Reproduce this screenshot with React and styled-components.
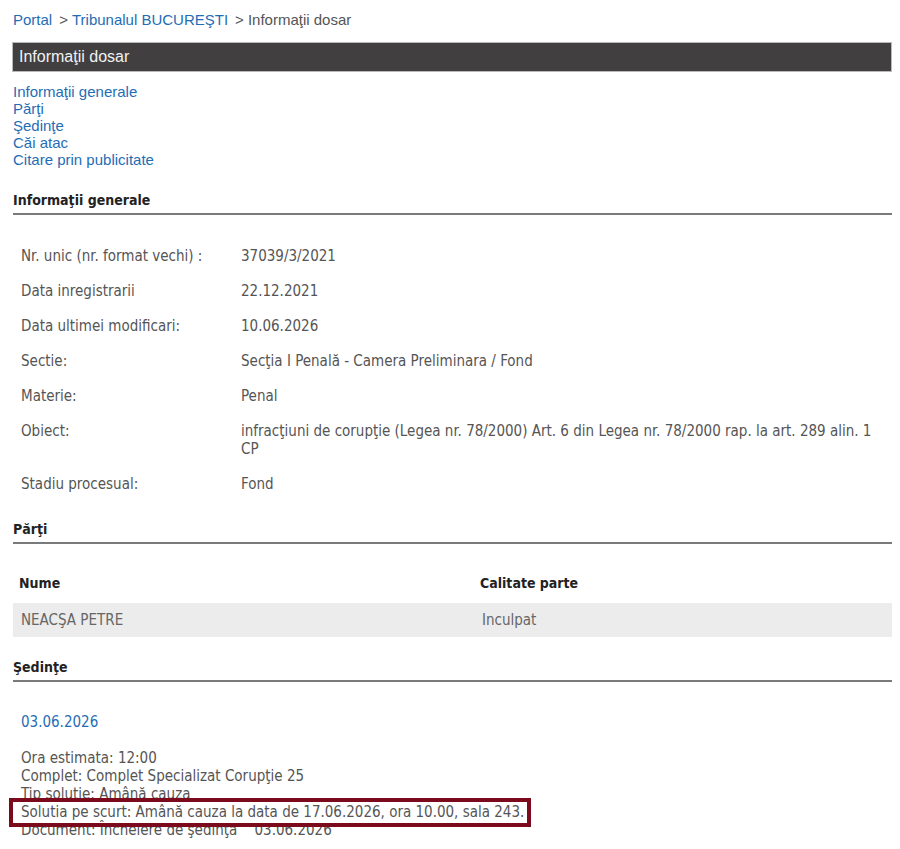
import styled, { createGlobalStyle } from "styled-components";

const GlobalStyle = createGlobalStyle`
  body {
    margin: 0;
    background: #fff;
    font-family: "Liberation Sans", Arial, sans-serif;
  }
`;

const Page = styled.div`
  padding: 11px 8px 0 12px;
  width: 880px;
`;

const Breadcrumb = styled.div`
  font-size: 15px;
  color: #555;
  line-height: 18px;
  padding-left: 1px;
  a {
    color: #1f6db5;
    text-decoration: none;
  }
  span.sep {
    margin: 0 4px 0 7px;
  }
`;

const TitleBar = styled.div`
  margin-top: 13px;
  height: 28px;
  background-color: #413f40;
  border: 1px solid #b9b9b9;
  color: #f2f2f2;
  font-size: 16px;
  line-height: 28px;
  padding-left: 6px;
`;

const Anchors = styled.ul`
  list-style: none;
  margin: 11px 0 0 1px;
  padding: 0;
  li {
    font-size: 15px;
    line-height: 17px;
    color: #1f6db5;
  }
`;

const SectionTitle = styled.h3`
  margin: ${(p) => p.$top}px 0 0 1px;
  font-family: "DejaVu Sans Condensed", "DejaVu Sans", sans-serif;
  font-size: 14px;
  font-weight: bold;
  color: #222;
  line-height: 18px;
  padding-bottom: 4px;
  border-bottom: 2px solid #7a7a7a;
`;

const InfoTable = styled.div`
  margin-top: 32px;
  display: grid;
  grid-template-columns: 220px 1fr;
  row-gap: 17px;
  padding-left: 9px;
  font-family: "DejaVu Sans Condensed", "DejaVu Sans", sans-serif;
  font-size: 15px;
  line-height: 18px;
  color: #555;
`;

const Parties = styled.div`
  margin-top: 30px;
  font-family: "DejaVu Sans Condensed", "DejaVu Sans", sans-serif;
  line-height: 18px;
`;

const PartyRow = styled.div`
  display: grid;
  grid-template-columns: 461px 1fr;
  padding: ${(p) => (p.$head ? "0 6px 11px" : "8px 8px")};
  background: ${(p) => (p.$head ? "transparent" : "#ececec")};
  color: ${(p) => (p.$head ? "#222" : "#666")};
  font-size: ${(p) => (p.$head ? "14px" : "15px")};
  font-weight: ${(p) => (p.$head ? "bold" : "normal")};
  margin-left: 1px;
`;

const Hearing = styled.div`
  position: relative;
  margin-top: 31px;
  padding-left: 9px;
  font-family: "DejaVu Sans Condensed", "DejaVu Sans", sans-serif;
  color: #555;
`;

const HearingDate = styled.div`
  font-size: 15px;
  color: #1f6db5;
  line-height: 18px;
`;

const HearingLines = styled.div`
  margin-top: 18px;
  font-size: 15px;
  line-height: 18px;
`;

const Highlight = styled.div`
  position: absolute;
  box-sizing: border-box;
  left: -3px;
  top: 85px;
  width: 522px;
  height: 29px;
  border: 4px solid #7a0a1c;
  pointer-events: none;
`;

const info = [
  ["Nr. unic (nr. format vechi) :", "37039/3/2021"],
  ["Data inregistrarii", "22.12.2021"],
  ["Data ultimei modificari:", "10.06.2026"],
  ["Sectie:", "Secţia I Penală - Camera Preliminara / Fond"],
  ["Materie:", "Penal"],
  [
    "Obiect:",
    "infracţiuni de corupţie (Legea nr. 78/2000) Art. 6 din Legea nr. 78/2000 rap. la art. 289 alin. 1 CP",
  ],
  ["Stadiu procesual:", "Fond"],
];

export default function App() {
  return (
    <Page>
      <GlobalStyle />
      <Breadcrumb>
        <a>Portal</a>
        <span className="sep">&gt;</span>
        <a>Tribunalul BUCUREŞTI</a>
        <span className="sep">&gt;</span>
        Informaţii dosar
      </Breadcrumb>
      <TitleBar>Informaţii dosar</TitleBar>
      <Anchors>
        <li>Informaţii generale</li>
        <li>Părţi</li>
        <li>Şedinţe</li>
        <li>Căi atac</li>
        <li>Citare prin publicitate</li>
      </Anchors>

      <SectionTitle $top={23}>Informaţii generale</SectionTitle>
      <InfoTable>
        {info.flatMap(([k, v]) => [
          <div key={k}>{k}</div>,
          <div key={k + "v"}>{v}</div>,
        ])}
      </InfoTable>

      <SectionTitle $top={27}>Părţi</SectionTitle>
      <Parties>
        <PartyRow $head>
          <div>Nume</div>
          <div>Calitate parte</div>
        </PartyRow>
        <PartyRow>
          <div>NEACŞA PETRE</div>
          <div>Inculpat</div>
        </PartyRow>
      </Parties>

      <SectionTitle $top={21}>Şedinţe</SectionTitle>
      <Hearing>
        <HearingDate>03.06.2026</HearingDate>
        <HearingLines>
          <div>Ora estimata: 12:00</div>
          <div>Complet: Complet Specializat Corupţie 25</div>
          <div>Tip solutie: Amână cauza</div>
          <div>Solutia pe scurt: Amână cauza la data de 17.06.2026, ora 10.00, sala 243.</div>
          <div>Document: Încheiere de şedinţă &nbsp;&nbsp;&nbsp;03.06.2026</div>
        </HearingLines>
        <Highlight />
      </Hearing>
    </Page>
  );
}
